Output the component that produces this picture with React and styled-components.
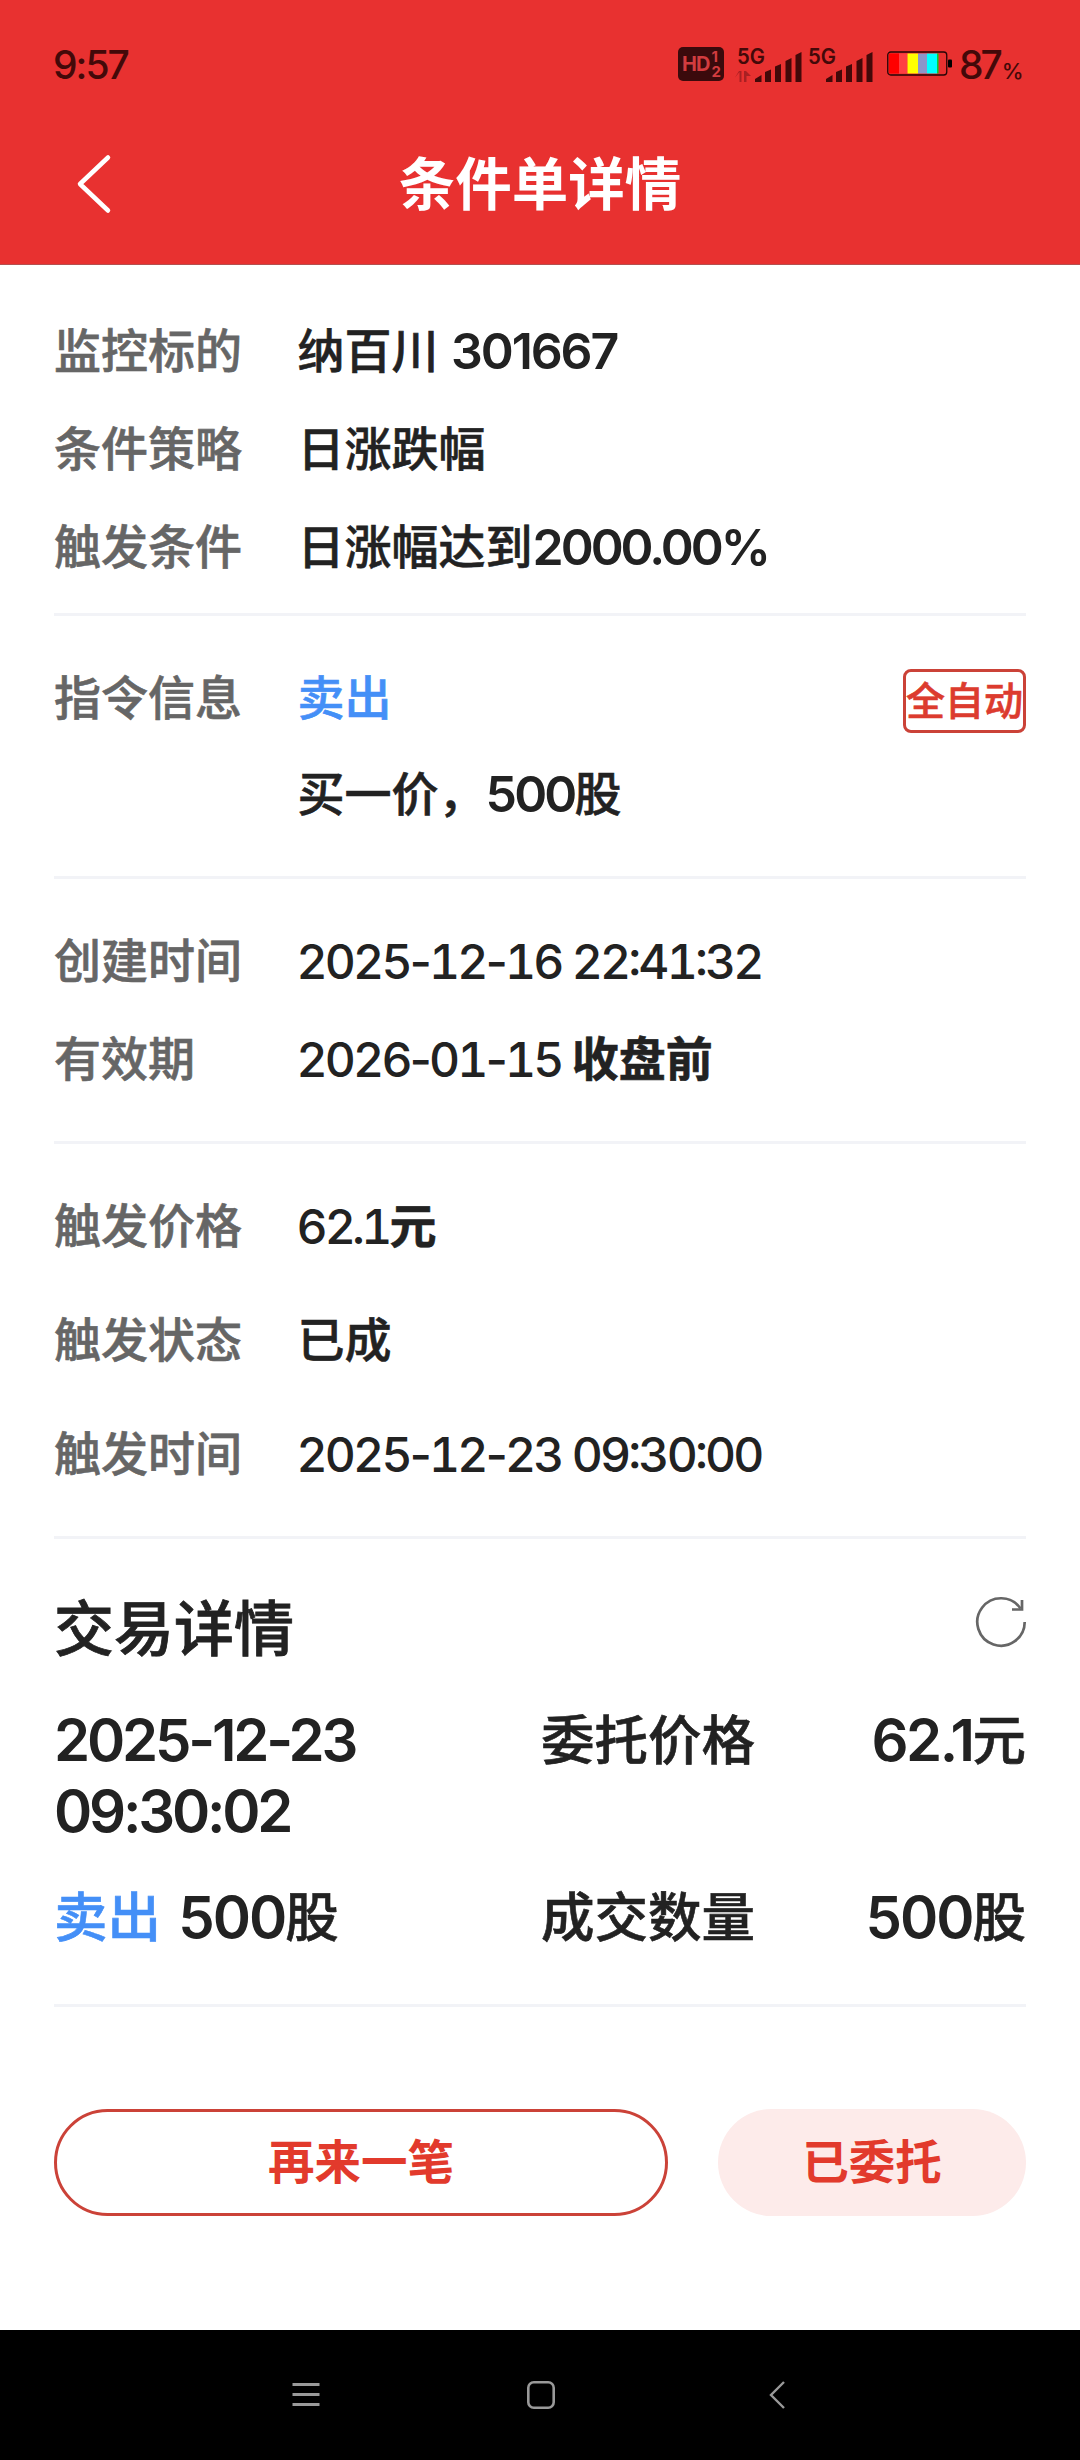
import React from "react";
import styled, { createGlobalStyle } from "styled-components";

const orderInfo = [
    { label: "监控标的", text: "纳百川 ", num: "301667", size: 50, gap: -2.1 },
    { label: "条件策略", text: "日涨跌幅" },
    { label: "触发条件", text: "日涨幅达到", num: "2000.00%", size: 50, gap: -3 },
];

const timeInfo = [
    { label: "创建时间", num: "2025-12-16 22:41:32", thin: true },
    { label: "有效期", num: "2026-01-15 ", thin: true, bold: "收盘前" },
];

const triggerInfo = [
    { label: "触发价格", num: "62.1", thin: true, bold: "元" },
    { label: "触发状态", text: "已成" },
    { label: "触发时间", num: "2025-12-23 09:30:00", thin: true },
];

const Signal = ({ arrows }) => (
    <svg width="71" height="40" viewBox="0 0 71 40" fill="#430909">
        <text x="2" y="20" fontFamily="Inter" fontSize="22" fontWeight="600" textLength="28" lengthAdjust="spacingAndGlyphs">5G</text>
        {arrows && <path d="M0 33.5 L4.5 28 V38 H6.5 V27 H4 Z M9 38 V27 H11 L16 32 H11.5 V38 Z" fill="#a92023"/>}
        <path d="M20 38 V35 L26.5 31 V38 Z"/>
        <path d="M30 38 V28 L36 25.5 V38 Z"/>
        <path d="M40 38 V22.5 L46 20 V38 Z"/>
        <path d="M50.5 38 V17 L56.5 14 V38 Z"/>
        <path d="M60.5 38 V11 L66.5 8 V38 Z"/>
    </svg>
);

const Battery = () => (
    <svg width="66" height="26" viewBox="0 0 66 26">
        <rect x="2" y="2.5" width="10" height="20" fill="#ff0000"/>
        <rect x="12" y="2.5" width="8.5" height="20" fill="#ff3f42"/>
        <rect x="20.5" y="2.5" width="10.5" height="20" fill="#ffff00"/>
        <rect x="31" y="2.5" width="9" height="20" fill="#8b96c9"/>
        <rect x="40" y="2.5" width="10" height="20" fill="#00ffff"/>
        <rect x="50" y="2.5" width="1.5" height="20" fill="#00d238"/>
        <rect x="0.75" y="1" width="59" height="23" rx="3" fill="none" stroke="#250506" strokeWidth="1.3"/>
        <rect x="61" y="8.5" width="4" height="8" rx="1" fill="#000"/>
    </svg>
);

// tabular digits give "-" and "." a wide cell, Mark pulls them back in
const Figures = ({ text }) => (
    <ThinNum>
        {text.split(/([-.])/).map((part, i) => {
            if (part === "-") return <Mark key={i} $pull={4.5}>-</Mark>;
            if (part === ".") return <Mark key={i} $pull={1}>.</Mark>;
            return part;
        })}
    </ThinNum>
);

const InfoRows = ({ rows, height }) => rows.map(cur => (
    <Row key={cur.label} $height={height}>
        <Label>{cur.label}</Label>
        <Value>
            {cur.text}
            {cur.thin && <Figures text={cur.num}/>}
            {cur.num && !cur.thin && <Num $size={cur.size} $gap={cur.gap}>{cur.num}</Num>}
            {cur.bold && <b>{cur.bold}</b>}
        </Value>
    </Row>
));

const App = () => {
    return (
        <React.Fragment>
            <GlobalStyle/>
            <Page>
                <Header>
                    <StatusBar>
                        <Clock>9:57</Clock>
                        <HdBadge>
                            <span>HD</span>
                            <HdSlots><i>1</i><i>2</i></HdSlots>
                        </HdBadge>
                        <Signals>
                            <Signal arrows/>
                            <Signal/>
                        </Signals>
                        <Battery/>
                        <Percent>87<small>%</small></Percent>
                    </StatusBar>
                    <TitleBar>
                        <BackBtn>
                            <svg width="36" height="60" viewBox="0 0 36 60" fill="none" stroke="#fff" strokeWidth="4.5" strokeLinecap="round" strokeLinejoin="round">
                                <path d="M32 3.5 L4 30 L32 56.5"/>
                            </svg>
                        </BackBtn>
                        <Title>条件单详情</Title>
                    </TitleBar>
                </Header>

                <Section $top={37} $bottom={17}>
                    <InfoRows rows={orderInfo} height={98}/>
                </Section>

                <Section $top={33} $bottom={34}>
                    <Row $height={97}>
                        <Label>指令信息</Label>
                        <Value $sell>卖出</Value>
                        <Tag>全自动</Tag>
                    </Row>
                    <Row $height={96}>
                        <Label/>
                        <Value>买一价，<Num $size={50} $gap={-2.8}>500</Num>股</Value>
                    </Row>
                </Section>

                <Section $top={33} $bottom={33}>
                    <InfoRows rows={timeInfo} height={98}/>
                </Section>

                <Section $top={25} $bottom={25}>
                    <InfoRows rows={triggerInfo} height={114}/>
                </Section>

                <Section $top={44} $bottom={51}>
                    <DealHead>
                        <h2>交易详情</h2>
                        <RefreshBtn>
                            <svg width="52" height="52" viewBox="0 0 52 52" fill="none" stroke="#666" strokeWidth="2.7">
                                <path d="M49.7 26 A23.7 23.7 0 1 1 45.5 12.5"/>
                                <path d="M47 4 V13.5 H37"/>
                            </svg>
                        </RefreshBtn>
                    </DealHead>
                    <DealGrid>
                        <DealTime><Num $size={58} $gap={-3.2}>2025-12-23 09:30:02</Num></DealTime>
                        <div>委托价格</div>
                        <DealNum><Num $size={58} $gap={-2.5}>62.1</Num>元</DealNum>
                        <div><Sell>卖出</Sell> <Num $size={58} $gap={-2}>500</Num>股</div>
                        <div>成交数量</div>
                        <DealNum><Num $size={58} $gap={-2}>500</Num>股</DealNum>
                    </DealGrid>
                </Section>

                <BtnGroup>
                    <Btn>再来一笔</Btn>
                    <Btn $done>已委托</Btn>
                </BtnGroup>

                <NavBar>
                    <svg width="28" height="30" viewBox="0 0 28 30" stroke="#999" strokeWidth="3">
                        <path d="M0.5 4.5 H27.5 M0.5 14.5 H27.5 M0.5 24.5 H27.5"/>
                    </svg>
                    <svg width="28" height="28" viewBox="0 0 28 28" fill="none" stroke="#999" strokeWidth="2.6">
                        <rect x="1.3" y="1.3" width="25.4" height="25.4" rx="5.5"/>
                    </svg>
                    <svg width="16" height="28" viewBox="0 0 16 28" fill="none" stroke="#999" strokeWidth="2.4">
                        <path d="M15 1 L2 14 L15 27"/>
                    </svg>
                </NavBar>
            </Page>
        </React.Fragment>
    );
};

const GlobalStyle = createGlobalStyle`
    * {
        box-sizing: border-box;
    }
    body {
        margin: 0;
        background: #fff;
    }
    svg {
        display: block;
        flex-shrink: 0;
    }
`
const Page = styled.div`
    display: flex;
    flex-direction: column;
    width: 1080px;
    height: 2460px;
    background: #fff;
    color: #222;
    font-family: Inter, "Noto Sans CJK SC", sans-serif;
    font-size: 47px;
    font-weight: 500;
`
const Header = styled.header`
    height: 265px;
    background: #e83130;
    border-bottom: 1px solid #b5504f;
`
const StatusBar = styled.div`
    display: flex;
    align-items: center;
    height: 104px;
    padding: 24px 55px 0 53px;
    color: #430909;
`
const Clock = styled.div`
    flex: 1;
    font-size: 39px;
    letter-spacing: -2px;
`
const HdBadge = styled.div`
    display: flex;
    align-items: center;
    justify-content: center;
    gap: 2px;
    width: 46px;
    height: 34px;
    margin-right: 11px;
    border-radius: 5px;
    background: #3b0a0c;
    color: #d23c3f;
    font-size: 20px;
    font-weight: 700;
    letter-spacing: -1px;
`
const HdSlots = styled.div`
    display: flex;
    flex-direction: column;
    font-size: 15px;
    line-height: 15px;
    i {
        font-style: normal;
    }
`
const Signals = styled.div`
    display: flex;
    margin-right: 10px;
`
const Percent = styled.div`
    width: 66px;
    margin-left: 6px;
    font-size: 39px;
    letter-spacing: -3px;
    white-space: nowrap;
    small {
        margin-left: 2px;
        font-size: 22px;
        letter-spacing: 0;
    }
`
const TitleBar = styled.div`
    display: grid;
    grid-template-columns: 120px 1fr 120px;
    align-items: center;
    height: 160px;
`
const BackBtn = styled.button`
    padding: 0 0 0 76px;
    border: 0;
    background: none;
`
const Title = styled.h1`
    margin: 2px 0 0;
    color: #fff;
    font-size: 56.5px;
    font-weight: 700;
    line-height: 80px;
    text-align: center;
`
const Section = styled.section`
    margin: 0 54px;
    padding: ${props => props.$top}px 0 ${props => props.$bottom}px;
    border-bottom: 3px solid #f2f3f7;
`
const Row = styled.div`
    display: flex;
    align-items: center;
    height: ${props => props.$height}px;
    line-height: 70px;
`
const Label = styled.div`
    width: 243.5px;
    color: #666;
    -webkit-text-stroke: 0.6px;
`
const Value = styled.div`
    flex: 1;
    color: ${props => props.$sell ? "#448ff7" : "#222"};
    white-space: pre;
    -webkit-text-stroke: 0.6px;
    b {
        font-weight: 700;
    }
`
const Num = styled.span`
    font-size: ${props => props.$size}px;
    font-weight: 600;
    letter-spacing: ${props => props.$gap}px;
    line-height: 1;
    vertical-align: -1px;
    -webkit-text-stroke: 0;
`
const ThinNum = styled.span`
    margin-left: -1px;
    font-size: 48px;
    font-weight: 450;
    font-feature-settings: "tnum", "calt";
    letter-spacing: -2.8px;
    line-height: 1;
    vertical-align: -1px;
    -webkit-text-stroke: 0;
`
const Mark = styled.span`
    margin: 0 -${props => props.$pull}px;
`
const Tag = styled.div`
    display: flex;
    align-items: center;
    justify-content: center;
    width: 123px;
    height: 64px;
    margin-top: 6px;
    border: 3px solid #cb4238;
    border-radius: 8px;
    color: #dc3b2e;
    font-size: 39px;
    white-space: nowrap;
    -webkit-text-stroke: 0.6px;
`
const DealHead = styled.div`
    display: flex;
    justify-content: space-between;
    height: 92px;
    h2 {
        margin: 0;
        font-size: 60px;
        font-weight: 500;
        line-height: 92px;
        -webkit-text-stroke: 0.8px;
    }
`
const RefreshBtn = styled.button`
    align-self: flex-start;
    margin: 13px -1px 0 0;
    padding: 0;
    border: 0;
    background: none;
`
const DealGrid = styled.div`
    display: grid;
    grid-template-columns: 487px 220px 1fr;
    row-gap: 35px;
    margin-top: 30px;
    font-size: 53.5px;
    line-height: 71px;
    -webkit-text-stroke: 0.6px;
`
const DealTime = styled.div`
    width: 370px;
`
const DealNum = styled.div`
    text-align: right;
`
const Sell = styled.span`
    margin-right: 3px;
    color: #448ff7;
`
const BtnGroup = styled.div`
    display: grid;
    grid-template-columns: 614px 308px;
    justify-content: space-between;
    padding: 102px 54px 0;
`
const Btn = styled.button`
    height: 107px;
    padding: 0;
    border: ${props => props.$done ? "0" : "3px solid #cb4238"};
    border-radius: 54px;
    background: ${props => props.$done ? "#fdebea" : "#fff"};
    color: #e23a2c;
    font-family: inherit;
    font-size: 46.5px;
    font-weight: 700;
    line-height: 1;
`
const NavBar = styled.nav`
    display: grid;
    grid-template-columns: 235px 242px 16px;
    align-items: center;
    height: 130px;
    margin-top: auto;
    padding-left: 292px;
    background: #000;
`
export default App;
